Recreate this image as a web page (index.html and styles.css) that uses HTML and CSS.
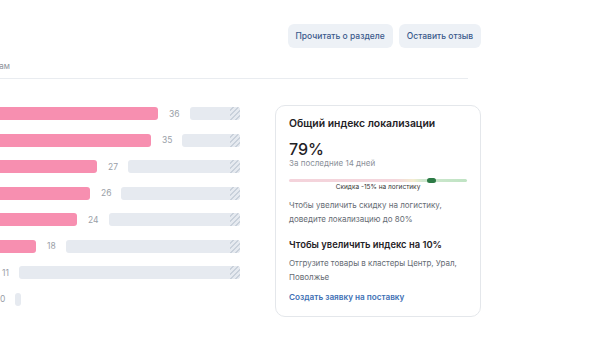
FILE: index.html
```html
<!DOCTYPE html>
<html lang="ru">
<head>
  <meta charset="UTF-8" />
  <meta name="viewport" content="width=device-width, initial-scale=1" />
  <title>Индекс локализации</title>
  <link rel="stylesheet" href="styles.css">
</head>
<body>

  <div class="page">
    <div class="toolbar">
      <button class="btn-soft">Прочитать о разделе</button>
      <button class="btn-soft">Оставить отзыв</button>
    </div>

    <div class="section-head">
      <span class="section-label">Продажи по кластерам</span>
    </div>

    <div class="section-body">
      <!-- Распределение по кластерам -->
      <div class="chart">
        <div class="bar-row">
          <div class="bar-fill" style="width:258px"></div>
          <span class="bar-value">36</span>
          <div class="bar-rest"></div>
        </div>
        <div class="bar-row">
          <div class="bar-fill" style="width:251px"></div>
          <span class="bar-value">35</span>
          <div class="bar-rest"></div>
        </div>
        <div class="bar-row">
          <div class="bar-fill" style="width:197px"></div>
          <span class="bar-value">27</span>
          <div class="bar-rest"></div>
        </div>
        <div class="bar-row">
          <div class="bar-fill" style="width:190px"></div>
          <span class="bar-value">26</span>
          <div class="bar-rest"></div>
        </div>
        <div class="bar-row">
          <div class="bar-fill" style="width:177px"></div>
          <span class="bar-value">24</span>
          <div class="bar-rest"></div>
        </div>
        <div class="bar-row">
          <div class="bar-fill" style="width:136px"></div>
          <span class="bar-value">18</span>
          <div class="bar-rest"></div>
        </div>
        <div class="bar-row">
          <div class="bar-fill" style="width:91px"></div>
          <span class="bar-value">11</span>
          <div class="bar-rest"></div>
        </div>
        <div class="bar-row">
          <div class="bar-fill" style="width:89px"></div>
          <span class="bar-value">0</span>
          <div class="bar-rest bar-rest--stub"></div>
        </div>
      </div>

      <!-- Карточка индекса -->
      <div class="index-card">
        <h3 class="card-title">Общий индекс локализации</h3>
        <div class="card-value">79%</div>
        <div class="card-period">За последние 14 дней</div>

        <div class="scale">
          <div class="scale-track">
            <span class="scale-marker"></span>
          </div>
          <div class="scale-caption">Скидка -15% на логистику</div>
        </div>

        <p class="card-text">Чтобы увеличить скидку на логистику, доведите локализацию до 80%</p>

        <h4 class="card-subtitle">Чтобы увеличить индекс на 10%</h4>
        <p class="card-text card-text--tight">Отгрузите товары в кластеры Центр, Урал, Поволжье</p>

        <a class="card-link" href="#">Создать заявку на поставку</a>
      </div>
    </div>
  </div>

</body>
</html>
```

FILE: styles.css
```css
body {
  margin: 0;
  background: #fff;
  font-family: Inter, "Noto Sans", Arial, sans-serif;
  color: #222;
  overflow: hidden;
}
.page {
  width: 581px;
  margin-left: -100px;
}

/* Кнопки сверху */
.toolbar {
  display: flex;
  justify-content: flex-end;
  gap: 6px;
  padding-top: 24px;
}
.btn-soft {
  height: 24px;
  padding: 0 8px;
  background: #edf1f6;
  color: #3b5a8c;
  border: none;
  border-radius: 6px;
  font-family: inherit;
  font-size: 8.5px;
  font-weight: 500;
  cursor: pointer;
}

/* Заголовок раздела */
.section-head {
  width: 568px;
  margin-top: 12px;
  padding-bottom: 6px;
  border-bottom: 1px solid #e9ecf0;
}
.section-label {
  display: block;
  width: 110px;
  text-align: right;
  font-size: 8px;
  line-height: 12px;
  color: #8a9099;
}

.section-body {
  display: flex;
  gap: 35px;
  margin-top: 26px;
}

/* График */
.chart {
  width: 340px;
  padding-top: 2px;
  display: flex;
  flex-direction: column;
  gap: 13.5px;
}
.bar-row {
  display: flex;
  align-items: center;
  height: 13px;
}
.bar-fill {
  height: 13px;
  background: #f78fb0;
  border-radius: 0 3px 3px 0;
  flex-shrink: 0;
}
.bar-value {
  margin: 0 10px 0 11px;
  font-size: 8.5px;
  color: #9aa0a8;
}
.bar-rest {
  flex: 1;
  height: 13px;
  background: #e6eaf0;
  border-radius: 3px;
  position: relative;
  overflow: hidden;
}
.bar-rest::after {
  content: "";
  position: absolute;
  top: 0;
  right: 0;
  width: 10px;
  height: 100%;
  background: repeating-linear-gradient(135deg, #e6eaf0 0 2px, #c9d1db 2px 3.5px);
}
.bar-rest--stub {
  flex: none;
  width: 6px;
}
.bar-rest--stub::after {
  display: none;
}

/* Карточка */
.index-card {
  width: 206px;
  box-sizing: border-box;
  border: 1px solid #e4e7eb;
  border-radius: 10px;
  padding: 10px 13px 13px;
  background: #fff;
}
.card-title {
  margin: 0;
  font-size: 10.4px;
  font-weight: 600;
  line-height: 16px;
  color: #1f2226;
}
.card-value {
  margin-top: 9px;
  font-size: 16px;
  font-weight: 500;
  line-height: 17px;
  color: #1f2226;
}
.card-period {
  margin-top: -1px;
  font-size: 8px;
  line-height: 12px;
  color: #8a9099;
}
.scale {
  margin-top: 9.5px;
}
.scale-track {
  position: relative;
  height: 3px;
  border-radius: 2px;
  background: linear-gradient(90deg, #f4d3db 0%, #f4d6dc 60%, #f3ecd0 70%, #cfe8cf 75%, #bfe3c3 100%);
}
.scale-marker {
  position: absolute;
  left: 138px;
  top: -1px;
  width: 9px;
  height: 5px;
  border-radius: 3px;
  background: #2c7a46;
}
.scale-caption {
  margin-top: 1px;
  text-align: center;
  font-size: 6.5px;
  line-height: 9px;
  color: #333;
}
.card-text {
  margin: 6.5px 0 0;
  font-size: 8px;
  line-height: 14px;
  color: #666c74;
}
.card-subtitle {
  margin: 10.5px 0 0;
  font-size: 9.4px;
  font-weight: 600;
  line-height: 16px;
  color: #1f2226;
}
.card-text--tight {
  margin-top: 4.5px;
  line-height: 13.5px;
}
.card-link {
  display: block;
  margin-top: 7px;
  font-size: 8.2px;
  font-weight: 600;
  line-height: 12px;
  color: #3d6fb4;
  text-decoration: none;
}
```
